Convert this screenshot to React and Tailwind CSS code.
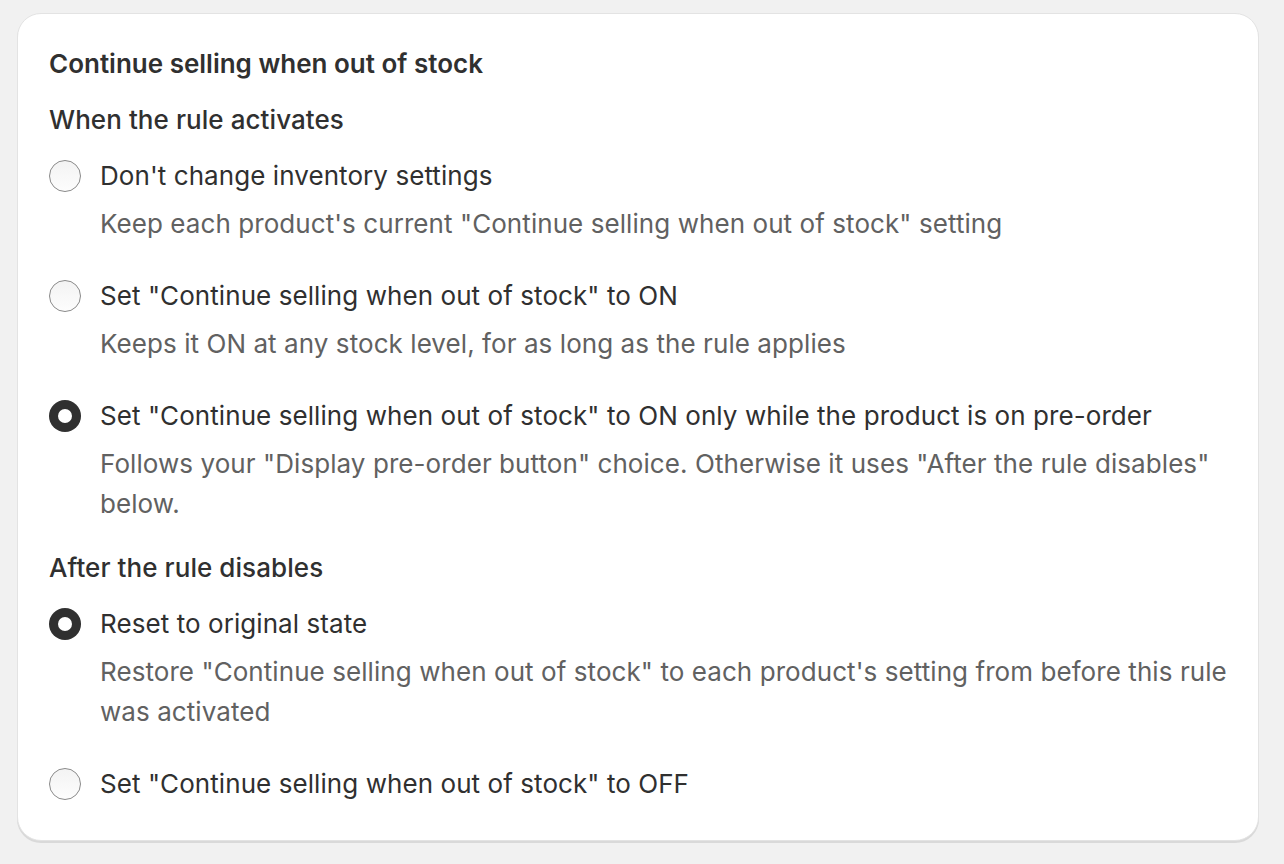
import { useState } from "react";

function Radio({ checked }) {
  return checked ? (
    <span className="mt-[4px] h-[32px] w-[32px] shrink-0 rounded-full bg-[#303030] flex items-center justify-center">
      <span className="h-[14px] w-[14px] rounded-full bg-white" />
    </span>
  ) : (
    <span className="mt-[4px] h-[32px] w-[32px] shrink-0 rounded-full border border-[#8a8a8a] bg-gradient-to-b from-[#f3f3f3] to-[#fdfdfd]" />
  );
}

function Option({ label, help, checked, onClick }) {
  return (
    <div className="flex gap-[19px] cursor-pointer" onClick={onClick}>
      <Radio checked={checked} />
      <div className="flex flex-col gap-[8px] tracking-[0.07px]">
        <span className="text-[#303030]">{label}</span>
        {help && <span className="text-[#616161]">{help}</span>}
      </div>
    </div>
  );
}

export default function App() {
  const [activate, setActivate] = useState("preorder");
  const [disable, setDisable] = useState("reset");

  const activateOptions = [
    {
      id: "none",
      label: "Don't change inventory settings",
      help: 'Keep each product\'s current "Continue selling when out of stock" setting',
    },
    {
      id: "on",
      label: 'Set "Continue selling when out of stock" to ON',
      help: "Keeps it ON at any stock level, for as long as the rule applies",
    },
    {
      id: "preorder",
      label: 'Set "Continue selling when out of stock" to ON only while the product is on pre-order',
      help: 'Follows your "Display pre-order button" choice. Otherwise it uses "After the rule disables" below.',
    },
  ];

  const disableOptions = [
    {
      id: "reset",
      label: "Reset to original state",
      help: 'Restore "Continue selling when out of stock" to each product\'s setting from before this rule was activated',
    },
    {
      id: "off",
      label: 'Set "Continue selling when out of stock" to OFF',
    },
  ];

  return (
    <div className="min-h-screen bg-[#f1f1f1] pt-[13px] pl-[17px] font-['Inter',sans-serif] text-[26px] leading-[40px]">
      <div className="w-[1242px] rounded-[24px] bg-white border border-[#e3e3e3] shadow-[0_2px_0_0_#d9d9d9] px-[31px] pt-[30px] pb-[36px]">
        <h2 className="font-semibold text-[#303030]">Continue selling when out of stock</h2>

        {/* WHEN THE RULE ACTIVATES */}
        <h3 className="mt-[16px] font-medium text-[#303030] tracking-[0.07px]">When the rule activates</h3>
        <div className="mt-[16px] flex flex-col gap-[32px]">
          {activateOptions.map((o) => (
            <Option
              key={o.id}
              label={o.label}
              help={o.help}
              checked={activate === o.id}
              onClick={() => setActivate(o.id)}
            />
          ))}
        </div>

        {/* AFTER THE RULE DISABLES */}
        <h3 className="mt-[24px] font-medium text-[#303030] tracking-[0.07px]">After the rule disables</h3>
        <div className="mt-[16px] flex flex-col gap-[32px]">
          {disableOptions.map((o) => (
            <Option
              key={o.id}
              label={o.label}
              help={o.help}
              checked={disable === o.id}
              onClick={() => setDisable(o.id)}
            />
          ))}
        </div>
      </div>
    </div>
  );
}
